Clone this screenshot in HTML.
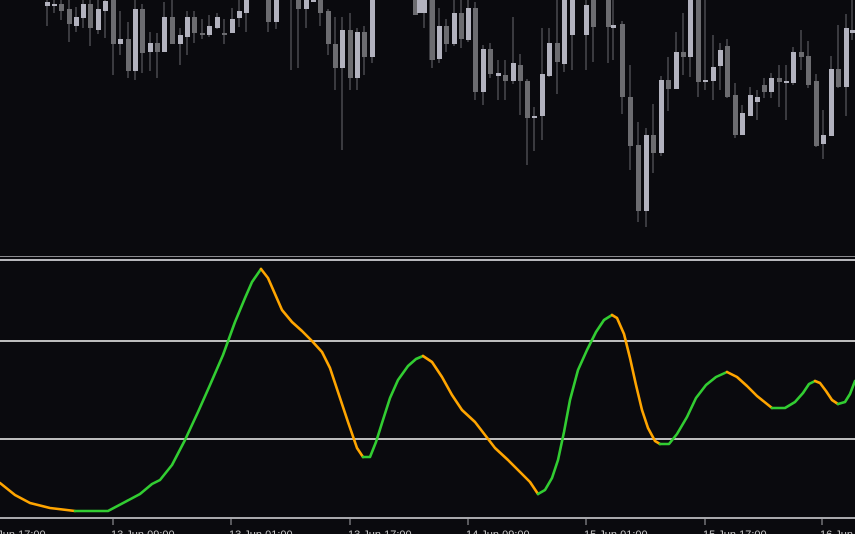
<!DOCTYPE html>
<html><head><meta charset="utf-8"><style>
html,body{margin:0;padding:0;background:#0a0a0e;width:855px;height:534px;overflow:hidden}
svg{display:block}
text{font-family:"Liberation Sans",sans-serif;font-size:11px;fill:#c8c8c8}
</style></head><body>
<svg width="855" height="534" viewBox="0 0 855 534">
<rect width="855" height="534" fill="#0a0a0e"/>
<g stroke-width="1" shape-rendering="crispEdges">
<!-- wicks -->
<g stroke="#6a6a70">
<path d="M47 0V26M54 0V13M61 0V20M69 0V42M76 7V32M83 0V28M90 0V46M98 0V34M105 0V38M113 0V75M120 11V55M128 22V78M135 0V80M142 4V73M150 32V71M157 33V78M164 2V52M172 0V44M180 28V65M187 11V55M194 11V43M202 19V39M209 15V37M217 13V29M224 19V44M232 8V33M239 0V27M246 0V32M268 0V32M276 0V29M291 0V70M298 0V68M306 0V28M320 0V26M328 9V55M335 17V90M342 17V150M350 13V90M357 28V90M364 26V75M372 0V63M415 0V3M424 0V28M430 0V60"/>
<path d="M432 0V68M439 8V63M446 19V52M454 0V46M461 0V48M468 0V42M475 2V100M483 45V105M490 43V78M498 60V100M505 60V100M513 17V84M520 54V115M527 79V165M534 107V151M542 28V140M549 28V77M557 0V94M564 0V72M572 0V70M586 0V70M593 0V62M608 0V63M613 0V60M622 21V114M630 65V170M638 122V222M646 128V227M653 104V173M661 76V156M668 57V111M676 32V89M683 13V75M690 0V77M698 0V97M705 0V90M713 35V100M720 43V90M727 39V98M735 83V138M742 105V135M750 87V116M757 90V120M764 78V98M771 73V98M779 65V107M786 65V120M793 47V85M801 30V70M808 41V88M816 74V147M823 110V159M831 56V136M838 25V88M846 14V116M852 0V40"/>
</g>
<!-- dark bodies -->
<g fill="#6c6c70">
<rect x="59" y="4" width="5" height="7"/><rect x="67" y="9" width="5" height="15"/><rect x="88" y="4" width="5" height="24"/><rect x="111" y="0" width="5" height="44"/><rect x="126" y="39" width="5" height="32"/><rect x="140" y="9" width="5" height="44"/><rect x="155" y="43" width="5" height="9"/><rect x="170" y="17" width="5" height="27"/><rect x="192" y="17" width="5" height="16"/><rect x="200" y="33" width="5" height="2"/><rect x="222" y="33" width="5" height="2"/><rect x="266" y="0" width="5" height="22"/><rect x="296" y="0" width="5" height="9"/><rect x="318" y="0" width="5" height="13"/><rect x="326" y="11" width="5" height="33"/><rect x="333" y="44" width="5" height="24"/><rect x="348" y="30" width="5" height="48"/><rect x="362" y="32" width="5" height="25"/><rect x="413" y="0" width="5" height="15"/>
<rect x="430" y="0" width="5" height="60"/><rect x="444" y="26" width="5" height="18"/><rect x="459" y="13" width="5" height="26"/><rect x="473" y="8" width="5" height="84"/><rect x="488" y="49" width="5" height="25"/><rect x="503" y="75" width="5" height="6"/><rect x="518" y="65" width="5" height="16"/><rect x="525" y="81" width="5" height="37"/><rect x="555" y="43" width="5" height="19"/><rect x="591" y="0" width="5" height="27"/><rect x="606" y="0" width="5" height="27"/><rect x="620" y="24" width="5" height="73"/><rect x="628" y="97" width="5" height="49"/><rect x="636" y="145" width="5" height="66"/><rect x="651" y="135" width="5" height="18"/><rect x="666" y="80" width="5" height="9"/><rect x="681" y="52" width="5" height="5"/><rect x="696" y="0" width="5" height="82"/><rect x="725" y="46" width="5" height="51"/><rect x="733" y="95" width="5" height="40"/><rect x="762" y="85" width="5" height="7"/><rect x="777" y="78" width="5" height="4"/><rect x="799" y="52" width="5" height="5"/><rect x="806" y="56" width="5" height="29"/><rect x="814" y="81" width="5" height="65"/><rect x="836" y="69" width="5" height="18"/>
</g>
<!-- light bodies -->
<g fill="#b2b2be">
<rect x="45" y="2" width="5" height="4"/><rect x="52" y="4" width="5" height="2"/><rect x="74" y="17" width="5" height="9"/><rect x="81" y="4" width="5" height="14"/><rect x="96" y="9" width="5" height="21"/><rect x="103" y="1" width="5" height="10"/><rect x="118" y="39" width="5" height="5"/><rect x="133" y="9" width="5" height="62"/><rect x="148" y="43" width="5" height="9"/><rect x="162" y="17" width="5" height="35"/><rect x="178" y="35" width="5" height="9"/><rect x="185" y="17" width="5" height="20"/><rect x="207" y="26" width="5" height="9"/><rect x="215" y="17" width="5" height="11"/><rect x="230" y="19" width="5" height="14"/><rect x="237" y="11" width="5" height="7"/><rect x="244" y="0" width="5" height="13"/><rect x="274" y="0" width="5" height="22"/><rect x="304" y="0" width="5" height="9"/><rect x="311" y="0" width="5" height="2"/><rect x="340" y="30" width="5" height="38"/><rect x="355" y="32" width="5" height="46"/><rect x="370" y="0" width="5" height="57"/><rect x="417" y="0" width="5" height="13"/><rect x="422" y="0" width="5" height="13"/>
<rect x="437" y="26" width="5" height="33"/><rect x="452" y="13" width="5" height="31"/><rect x="466" y="8" width="5" height="32"/><rect x="481" y="49" width="5" height="43"/><rect x="496" y="73" width="5" height="3"/><rect x="511" y="63" width="5" height="18"/><rect x="532" y="116" width="5" height="2"/><rect x="540" y="74" width="5" height="42"/><rect x="547" y="43" width="5" height="33"/><rect x="562" y="0" width="5" height="64"/><rect x="570" y="0" width="5" height="35"/><rect x="584" y="5" width="5" height="30"/><rect x="611" y="25" width="5" height="3"/><rect x="644" y="135" width="5" height="76"/><rect x="659" y="80" width="5" height="73"/><rect x="674" y="52" width="5" height="37"/><rect x="688" y="0" width="5" height="57"/><rect x="703" y="80" width="5" height="2"/><rect x="711" y="67" width="5" height="14"/><rect x="718" y="50" width="5" height="16"/><rect x="740" y="113" width="5" height="22"/><rect x="748" y="95" width="5" height="21"/><rect x="755" y="97" width="5" height="5"/><rect x="769" y="78" width="5" height="14"/><rect x="784" y="81" width="5" height="2"/><rect x="791" y="52" width="5" height="31"/><rect x="821" y="135" width="5" height="9"/><rect x="829" y="69" width="5" height="67"/><rect x="844" y="28" width="5" height="59"/><rect x="850" y="30" width="5" height="3"/>
</g>
<!-- separators -->
<rect x="0" y="256" width="855" height="1" fill="#8a8a8e"/>
<rect x="0" y="259" width="855" height="2" fill="#b8b8bc"/>
<rect x="0" y="340" width="855" height="2" fill="#bdbdbd"/>
<rect x="0" y="438" width="855" height="2" fill="#bdbdbd"/>
<rect x="0" y="517" width="855" height="2" fill="#a8a8ac"/>
<path d="M113 519V525M231 519V525M350 519V525M468 519V525M586 519V525M705 519V525M822 519V525" stroke="#a8a8ac"/>
</g>
<g fill="none" stroke-width="2.6" stroke-linejoin="round" stroke-linecap="round">
<path stroke="#ffa500" d="M0 483L15 495L30 503L50 508L75 511"/>
<path stroke="#32cd32" d="M75 511L108 511L125 502L140 494L152 484L160 480L172 465L185 440L198 412L210 385L223 355L235 322L245 298L252 282L261 269"/>
<path stroke="#ffa500" d="M261 269L268 278L275 294L282 310L292 322L302 331L312 341L322 352L330 368L338 392L348 422L357 448L363 457"/>
<path stroke="#32cd32" d="M363 457L370 457L376 442L382 423L390 398L398 380L408 366L416 359L423 356"/>
<path stroke="#ffa500" d="M423 356L432 362L442 377L452 395L462 410L475 422L485 435L495 448L508 460L520 472L530 482L538 494"/>
<path stroke="#32cd32" d="M538 494L545 490L552 478L558 460L564 432L570 400L578 370L587 350L596 332L604 320L612 315"/>
<path stroke="#ffa500" d="M612 315L617 318L624 334L630 358L636 385L642 410L648 428L655 441L660 444"/>
<path stroke="#32cd32" d="M660 444L669 444L677 434L687 417L696 398L706 385L716 377L727 372"/>
<path stroke="#ffa500" d="M727 372L737 377L747 386L757 396L767 404L772 408"/>
<path stroke="#32cd32" d="M772 408L785 408L795 402L803 393L809 384L815 381"/>
<path stroke="#ffa500" d="M815 381L820 383L826 391L832 400L838 404"/>
<path stroke="#32cd32" d="M838 404L845 402L850 394L855 381"/>
</g>
<text x="-18" y="538">12 Jun 17:00</text>
<text x="111" y="538">13 Jun 09:00</text>
<text x="229" y="538">13 Jun 01:00</text>
<text x="348" y="538">13 Jun 17:00</text>
<text x="466" y="538">14 Jun 09:00</text>
<text x="584" y="538">15 Jun 01:00</text>
<text x="703" y="538">15 Jun 17:00</text>
<text x="820" y="538">16 Jun 09:00</text>
</svg>
</body></html>
